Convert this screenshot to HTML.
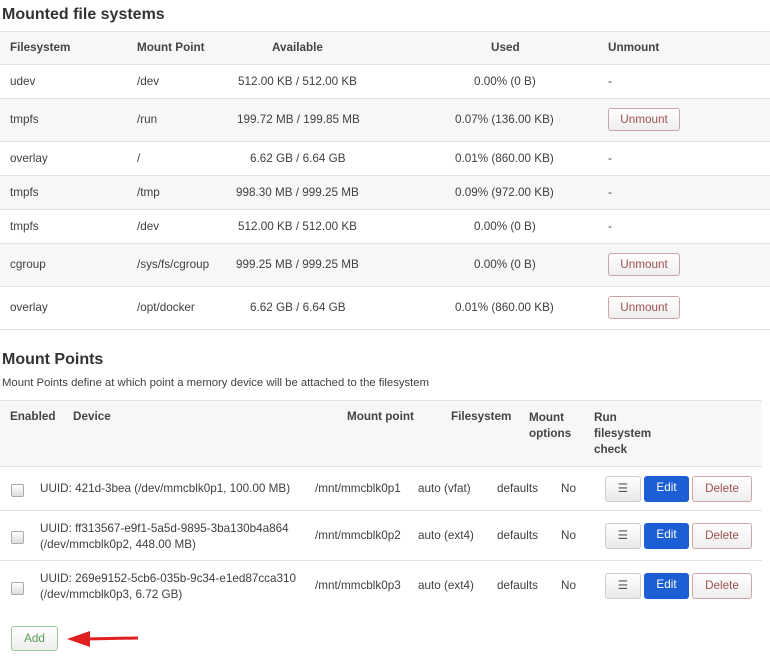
<!DOCTYPE html>
<html><head><style>
body{margin:0;width:770px;height:664px;background:#fff;font-family:"Liberation Sans",sans-serif;font-size:11.7px;color:#404040;position:relative;overflow:hidden}
.a{position:absolute;white-space:nowrap}
.r{position:absolute;left:0;width:770px;border-top:1px solid #e2e2e2}
.g{background:#f7f7f7}
h3{position:absolute;margin:0;font-size:16px;font-weight:bold;color:#333}
.b{font-weight:bold;color:#444}
.um{position:absolute;left:608px;width:72px;height:23px;border:1px solid #c9a5a5;border-radius:3px;background:linear-gradient(#fff,#eee);color:#a05050;text-align:center;line-height:21px;box-sizing:border-box}
.cb{position:absolute;left:11px;width:11px;height:11px;border:1px solid #aaa;border-radius:2px;background:linear-gradient(#fff,#ddd)}
.bt{position:absolute;height:26px;line-height:24px;text-align:center;border-radius:3px;box-sizing:border-box}
.m{left:605px;width:36px;border:1px solid #ccc;background:linear-gradient(#fff,#e8e8e8);color:#555}
.e{left:644px;width:45px;background:#1c5fd4;color:#fff}
.d{left:692px;width:60px;border:1px solid #c9a5a5;background:linear-gradient(#fff,#eee);color:#a05050}
</style></head><body>
<h3 style="left:2px;top:6px">Mounted file systems</h3>
<div class="r g" style="top:31px;height:33px"></div>
<div class="r" style="top:64px;height:34px"></div>
<div class="r g" style="top:98px;height:43px"></div>
<div class="r" style="top:141px;height:34px"></div>
<div class="r g" style="top:175px;height:34px"></div>
<div class="r" style="top:209px;height:34px"></div>
<div class="r g" style="top:243px;height:43px"></div>
<div class="r" style="top:286px;height:43px"></div>
<div class="r" style="top:329px;height:0"></div>
<div class="a b" style="left:10px;top:41px">Filesystem</div>
<div class="a b" style="left:137px;top:41px">Mount Point</div>
<div class="a b" style="left:272px;top:41px">Available</div>
<div class="a b" style="left:491px;top:41px">Used</div>
<div class="a b" style="left:608px;top:41px">Unmount</div>

<div class="a" style="left:10px;top:75px">udev</div><div class="a" style="left:137px;top:75px">/dev</div><div class="a" style="left:238px;top:75px">512.00 KB / 512.00 KB</div><div class="a" style="left:474px;top:75px">0.00% (0 B)</div><div class="a" style="left:608px;top:75px">-</div>
<div class="a" style="left:10px;top:113px">tmpfs</div><div class="a" style="left:137px;top:113px">/run</div><div class="a" style="left:237px;top:113px">199.72 MB / 199.85 MB</div><div class="a" style="left:455px;top:113px">0.07% (136.00 KB)</div><div class="um" style="top:108px">Unmount</div>
<div class="a" style="left:10px;top:152px">overlay</div><div class="a" style="left:137px;top:152px">/</div><div class="a" style="left:250px;top:152px">6.62 GB / 6.64 GB</div><div class="a" style="left:455px;top:152px">0.01% (860.00 KB)</div><div class="a" style="left:608px;top:152px">-</div>
<div class="a" style="left:10px;top:186px">tmpfs</div><div class="a" style="left:137px;top:186px">/tmp</div><div class="a" style="left:236px;top:186px">998.30 MB / 999.25 MB</div><div class="a" style="left:455px;top:186px">0.09% (972.00 KB)</div><div class="a" style="left:608px;top:186px">-</div>
<div class="a" style="left:10px;top:220px">tmpfs</div><div class="a" style="left:137px;top:220px">/dev</div><div class="a" style="left:238px;top:220px">512.00 KB / 512.00 KB</div><div class="a" style="left:474px;top:220px">0.00% (0 B)</div><div class="a" style="left:608px;top:220px">-</div>
<div class="a" style="left:10px;top:258px">cgroup</div><div class="a" style="left:137px;top:258px">/sys/fs/cgroup</div><div class="a" style="left:236px;top:258px">999.25 MB / 999.25 MB</div><div class="a" style="left:474px;top:258px">0.00% (0 B)</div><div class="um" style="top:253px">Unmount</div>
<div class="a" style="left:10px;top:301px">overlay</div><div class="a" style="left:137px;top:301px">/opt/docker</div><div class="a" style="left:250px;top:301px">6.62 GB / 6.64 GB</div><div class="a" style="left:455px;top:301px">0.01% (860.00 KB)</div><div class="um" style="top:296px">Unmount</div>

<h3 style="left:2px;top:351px">Mount Points</h3>
<div class="a" style="left:2px;top:377px;font-size:11.3px">Mount Points define at which point a memory device will be attached to the filesystem</div>
<div class="r g" style="top:400px;height:66px;width:762px"></div>
<div class="r" style="top:466px;height:44px;width:762px"></div>
<div class="r" style="top:510px;height:50px;width:762px"></div>
<div class="r" style="top:560px;height:50px;width:762px"></div>
<div class="a b" style="left:10px;top:410px">Enabled</div>
<div class="a b" style="left:73px;top:410px">Device</div>
<div class="a b" style="left:347px;top:410px">Mount point</div>
<div class="a b" style="left:451px;top:410px">Filesystem</div>
<div class="a b" style="left:529px;top:410px;line-height:16px">Mount<br>options</div>
<div class="a b" style="left:594px;top:410px;line-height:16px">Run<br>filesystem<br>check</div>

<div class="cb" style="top:484px"></div>
<div class="a" style="left:40px;top:482px">UUID: 421d-3bea (/dev/mmcblk0p1, 100.00 MB)</div>
<div class="a" style="left:315px;top:482px">/mnt/mmcblk0p1</div><div class="a" style="left:418px;top:482px">auto (vfat)</div><div class="a" style="left:497px;top:482px">defaults</div><div class="a" style="left:561px;top:482px">No</div>
<div class="bt m" style="top:476px">☰</div><div class="bt e" style="top:476px">Edit</div><div class="bt d" style="top:476px">Delete</div>

<div class="cb" style="top:531px"></div>
<div class="a" style="left:40px;top:521px;line-height:16px">UUID: ff313567-e9f1-5a5d-9895-3ba130b4a864<br>(/dev/mmcblk0p2, 448.00 MB)</div>
<div class="a" style="left:315px;top:529px">/mnt/mmcblk0p2</div><div class="a" style="left:418px;top:529px">auto (ext4)</div><div class="a" style="left:497px;top:529px">defaults</div><div class="a" style="left:561px;top:529px">No</div>
<div class="bt m" style="top:523px">☰</div><div class="bt e" style="top:523px">Edit</div><div class="bt d" style="top:523px">Delete</div>

<div class="cb" style="top:582px"></div>
<div class="a" style="left:40px;top:571px;line-height:16px">UUID: 269e9152-5cb6-035b-9c34-e1ed87cca310<br>(/dev/mmcblk0p3, 6.72 GB)</div>
<div class="a" style="left:315px;top:579px">/mnt/mmcblk0p3</div><div class="a" style="left:418px;top:579px">auto (ext4)</div><div class="a" style="left:497px;top:579px">defaults</div><div class="a" style="left:561px;top:579px">No</div>
<div class="bt m" style="top:573px">☰</div><div class="bt e" style="top:573px">Edit</div><div class="bt d" style="top:573px">Delete</div>

<div class="bt" style="left:11px;top:626px;width:47px;height:25px;line-height:23px;border:1px solid #9c9;background:linear-gradient(#fff,#eee);color:#5a9a5a">Add</div>
<svg class="a" style="left:64px;top:628px" width="76" height="22"><line x1="20" y1="11" x2="74" y2="10" stroke="#e02020" stroke-width="3"/><polygon points="3,11 26,3 26,19" fill="#e02020"/></svg>
</body></html>
